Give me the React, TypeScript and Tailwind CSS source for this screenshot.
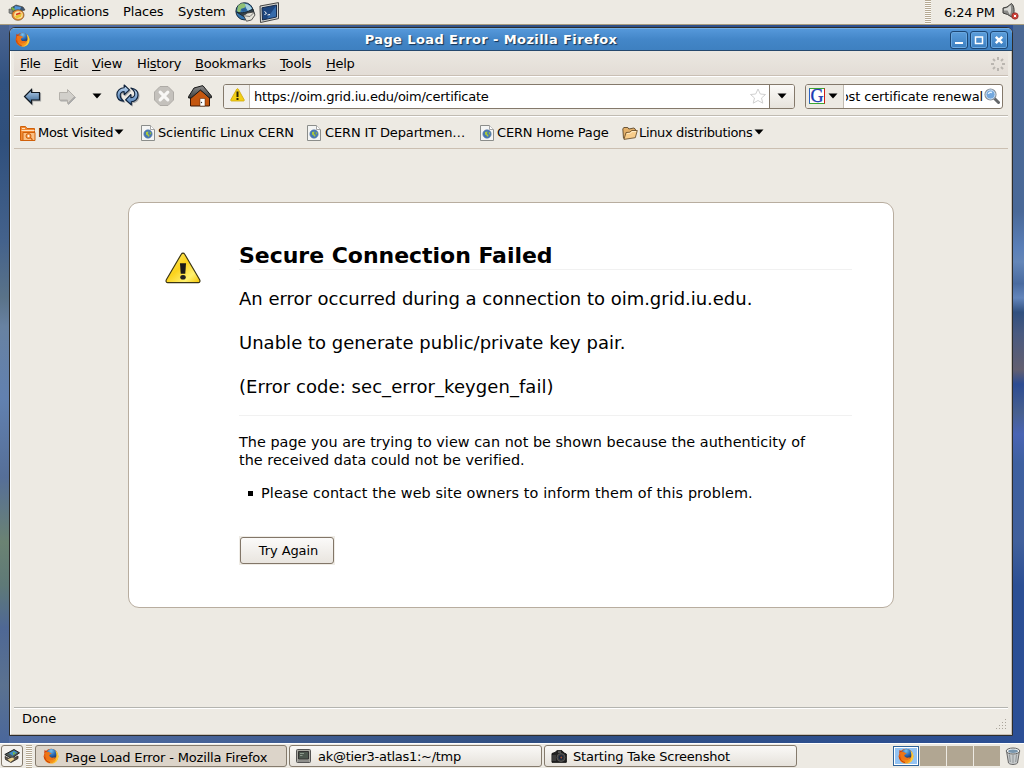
import React from 'react';

type P = { className?: string };

const Firefox = ({ className = '' }: P) => (
  <svg viewBox="0 0 16 16" className={className}>
    <defs>
      <radialGradient id="ffGlobe" cx=".45" cy=".2" r=".8"><stop stopColor="#7cc4ee" /><stop offset=".5" stopColor="#2f6fb8" /><stop offset="1" stopColor="#122c66" /></radialGradient>
      <linearGradient id="ffFox" x2="1" y2="1"><stop stopColor="#d2400c" /><stop offset=".5" stopColor="#f07812" /><stop offset="1" stopColor="#fbb42a" /></linearGradient>
    </defs>
    <circle cx="8" cy="8.200" r="7.400" fill="url(#ffFox)" />
    <path d="M1.200 5L1.600 1.800 4 4z" fill="#d2400c" />
    <circle cx="8.600" cy="6" r="5.200" fill="url(#ffGlobe)" />
    <path d="M2 4.200l3.800-.4C6.300 4.600 7.200 5 8.500 5c-.2 1.300-1.900 1.400-2.200 2.100 0 1.500 1 2.500 2.700 2.600 1.200.1 2-.5 2.900-.3-.5 2-3.400 3.200-5.800 2.300C3.500 11 2 7.500 2 4.200z" fill="#ee7416" />
    <path d="M12.300 2.400c3 2 3.900 5.800 2.500 9-1.400 3-4.600 4.600-7.600 4.100 3.300-.3 5.700-2.400 6.200-5.600.4-2.700-.1-5.300-1.100-7.500z" fill="#fdcb38" />
    <path d="M1.500 9c.6 3 2.800 5 5.500 5.500" stroke="#c63c08" fill="none" />
  </svg>
);

const Arrow = ({ off }: { off?: boolean }) => (
  <svg viewBox="0 0 18 17" className="h-[17px] w-[18px] drop-shadow-[1px_1px_0.5px_#aaa]">
    <defs><linearGradient id="ab" x2="0" y2="1"><stop stopColor="#b5d0ec" /><stop offset="1" stopColor="#34628f" /></linearGradient></defs>
    {off
      ? <path d="M1.500 4.500h8v-3l7 7-7 7v-3.500h-8z" fill="#d2d0cb" stroke="#b4b1ab" />
      : <path d="M16.500 4.500h-8v-3l-7 7 7 7V12h8z" fill="url(#ab)" stroke="#101820" strokeWidth="1.200" />}
  </svg>
);

const Caret = ({ className = '' }: P) => (
  <svg viewBox="0 0 10 6" className={`h-[6px] w-[10px] shrink-0 ${className}`}><path d="M.5.5h9L5 5.600z" fill="#000" /></svg>
);

const Reload = () => (
  <svg viewBox="0 0 24 23" className="h-[22px] w-[23px] drop-shadow-[1px_1px_0.5px_#aaa]">
    <defs><linearGradient id="rl" x2="0" y2="1"><stop stopColor="#c4dcf4" /><stop offset="1" stopColor="#4a7ab2" /></linearGradient></defs>
    <g fill="url(#rl)" stroke="#10233c" strokeWidth="1.200" strokeLinejoin="round">
      <path d="M8 18C3 17.500.8 14.500.9 11 1 7 4.500 3.800 8.500 3.900V1L14 6.200l-5.500 5V8C6 8 4.300 9.500 4.400 12c.1 2.500 1.600 4.500 3.600 6z" />
      <path d="M15.500 4.200c4.800.8 7.600 3.500 7.500 7.300 0 4-3.200 7-7 7.100v3.200L10 16.500l5.500-5.500v3.300c2.500 0 4.200-1.600 4.100-4-.1-2.400-1.600-4.500-4.100-6.100z" />
    </g>
  </svg>
);

const Stop = () => (
  <svg viewBox="0 0 20 20" className="h-5 w-5">
    <path d="M6 .5h8L19.500 6v8L14 19.500H6L.5 14V6z" fill="#c4c1bc" stroke="#aeaba6" />
    <path d="M6.200 6.200l7.600 7.600M13.800 6.200l-7.600 7.600" stroke="#f8f7f5" strokeWidth="3.200" strokeLinecap="round" />
  </svg>
);

const Home = () => (
  <svg viewBox="0 0 24 22" className="h-[22px] w-6">
    <defs><linearGradient id="rf" x2="0" y2="1"><stop stopColor="#8c8c8c" /><stop offset="1" stopColor="#3c3c3c" /></linearGradient></defs>
    <path d="M2.500 11L12 5l9.500 6v10h-19z" fill="#c4560f" stroke="#3c1605" />
    <path d="M.6 11.500L6 3l8-2.200h1L23.400 11v1.800h-2.200L12.500 5 3.200 13H.6z" fill="url(#rf)" stroke="#181818" strokeLinejoin="round" />
    <path d="M12 13.500h5V21h-5z" fill="#fff" stroke="#4d2007" strokeWidth=".5" /><circle cx="13.500" cy="17.500" r=".7" fill="#333" />
  </svg>
);

const Warn = ({ className = '' }: P) => (
  <svg viewBox="0 0 38 34" className={className}>
    <defs><linearGradient id="wy" x1="0" x2="1" y2="1"><stop stopColor="#fff27a" /><stop offset=".45" stopColor="#fbd21c" /><stop offset=".75" stopColor="#fff170" /><stop offset="1" stopColor="#f4c400" /></linearGradient></defs>
    <path d="M17.200 2.400c.9-1.500 2.700-1.500 3.600 0l15.800 27c.8 1.600 0 3.100-1.500 3.100H2.900c-1.500 0-2.300-1.500-1.500-3.100z" fill="url(#wy)" stroke="#3a3414" strokeWidth="1.200" />
    <path d="M15.800 12h6.400l-.8 11h-4.800z" fill="#191919" /><ellipse cx="19" cy="26.800" rx="2.900" ry="2.400" fill="#222" />
  </svg>
);

const WarnMini = () => (
  <svg viewBox="0 0 15 14" className="h-[14px] w-[15px]">
    <path d="M6.700 1.200c.4-.7 1.200-.7 1.600 0l5.900 10.600c.3.600 0 1.200-.7 1.200h-12c-.7 0-1-.6-.7-1.200z" fill="#f3cf14" stroke="#cfa70a" strokeWidth=".8" />
    <path d="M6.500 3.500h2v5.500h-2zM6.500 10h2v2h-2z" fill="#2a2405" />
  </svg>
);

const PageIcon = () => (
  <svg viewBox="0 0 14 16" className="h-4 w-[14px] shrink-0">
    <path d="M.5.5h9l4 4v11H.5z" fill="#f4f5f4" stroke="#8b8d8a" /><path d="M9.500.5v4h4" fill="#fff" stroke="#a5a5a5" />
    <circle cx="7" cy="9" r="4.200" fill="#4577b4" stroke="#5a7ba5" strokeWidth=".6" /><path d="M5 7l2.500-.5L7 9l1.500 1L8 12 6.500 10.500 5 9.500z" fill="#a8c83c" /><path d="M8.800 6.800l1.500 1-.3 2-1.200-1z" fill="#93b83b" />
  </svg>
);

const MostVisited = () => (
  <svg viewBox="0 0 16 16" className="h-4 w-4 shrink-0">
    <path d="M.5 1.500h5l1.500 2h7.500v12H.5z" fill="#f08a34" stroke="#d0600a" /><path d="M1.500 5.500h13M2 3.500h3" stroke="#ffe0bd" />
    <path d="M3 7.500h12v8H3z" fill="#fbc084" stroke="#d0600a" /><circle cx="8.500" cy="11" r="2.500" fill="#f3a055" stroke="#d0600a" /><circle cx="8.500" cy="11" r="1" fill="#fff" /><path d="M10.500 12.800l2 2" stroke="#d0600a" strokeWidth="1.300" />
  </svg>
);

const Folder = () => (
  <svg viewBox="0 0 16 14" className="h-[14px] w-4 shrink-0">
    <path d="M1.500 12.500L.8 3l1-1.500h4l1 1.500 5-1 1.500 1v2" fill="#e3b06a" stroke="#4b371c" strokeWidth=".8" /><path d="M2 13.400L4 6.500l4-.3 1.500-1.700h5.800l-2 7.200z" fill="#f8cd8b" stroke="#5d4423" strokeWidth=".8" strokeLinejoin="round" /><path d="M5 7.600l3.500-.4L10 5.600h4" fill="none" stroke="#ffecc9" />
  </svg>
);

const Foot = () => (
  <svg viewBox="0 0 18 18" className="h-[18px] w-[18px]">
    <path d="M3 5l5-3 7 2 2 3-4 1-8 1z" fill="#3b536e" stroke="#444" strokeWidth=".7" /><path d="M7 3l6 1-1 3H6z" fill="#4e93d8" /><path d="M4 4l3 2-1 2-3-1z" fill="#76b83a" />
    <path d="M1 6l4 1-1 4-3-1z" fill="#8c8f8c" stroke="#555" strokeWidth=".6" />
    <ellipse cx="10" cy="12" rx="6" ry="5.300" fill="#ef8d32" stroke="#715022" strokeWidth=".7" /><ellipse cx="10.500" cy="12" rx="4.300" ry="3.800" fill="#f9e8a4" /><path d="M7 13l7-3-1 4-5 1.500z" fill="#e9c333" /><path d="M8 11.500l4.500-1.500" stroke="#d6301a" strokeWidth="1.500" />
  </svg>
);

const Globe = () => (
  <svg viewBox="0 0 21 20" className="h-5 w-[21px]">
    <circle cx="9.500" cy="9.300" r="8.600" fill="#3474ae" stroke="#192c3b" /><path d="M3 4c3-4 7-3 9-1L9 6l-3 1-1 4-3-2z" fill="#8fc074" /><path d="M10 2c3 0 6 2 7 5l-4 2-2-3z" fill="#a5cfdf" /><path d="M6 7l4-1 2 2-4 2z" fill="#2b5f96" />
    <path d="M1.500 10c5 2 11 0 16.500-3l1.500 5-4 4-6-1z" fill="#36434a" stroke="#172026" strokeWidth=".8" /><path d="M8.500 13.500l4-2.500 6-1 1.500 3-3.500 5-5 1.200z" fill="#e4e2d8" stroke="#333" strokeWidth=".8" /><path d="M9.500 13.800l5.500.7 4-4" fill="none" stroke="#777" />
  </svg>
);

const Terminal = () => (
  <svg viewBox="0 0 21 21" className="h-[21px] w-[21px]">
    <path d="M1 4L19.500.6v16L1.500 20.500z" fill="#d5d6d1" stroke="#444" /><path d="M3 5.800L17.500 3v12L3.500 18z" fill="#1d467f" stroke="#182b4a" /><path d="M17 4v10.500L8 16.500z" fill="#356bab" /><path d="M5.500 9.500l2 1.500-2 2M8.500 13l2.500-.5" stroke="#fff" fill="none" />
  </svg>
);

const Speaker = () => (
  <svg viewBox="0 0 17 18" className="h-[18px] w-[17px]">
    <path d="M1 6l4-1L9.500 1.500c3 2.500 3.500 9 1 14L5.500 12.500 1 11z" fill="#8b8b88" stroke="#3b3b39" /><path d="M2 6.800l3.500-1L8.500 3c.8 3 .8 7-.5 10l-2.500-4.500L2 8.500z" fill="#dadad6" />
    <circle cx="13" cy="14" r="3.200" fill="#cf4238" stroke="#822" strokeWidth=".7" /><path d="M11.900 12.900l2.200 2.200m0-2.200l-2.200 2.200" stroke="#fff" />
  </svg>
);

const Trash = () => (
  <svg viewBox="0 0 16 18" className="h-[18px] w-4">
    <path d="M1.500 4l2 12c2 2 7 2 9 0l2-12z" fill="#c6c9ca" stroke="#666" /><path d="M4.500 7.500l.8 7.500M8 8v8M11.500 7.500l-.8 7.500" stroke="#8f9598" /><ellipse cx="8" cy="4" rx="6.800" ry="3" fill="#eceeee" stroke="#666" /><ellipse cx="8" cy="4.200" rx="4.800" ry="1.700" fill="#7895ad" />
  </svg>
);

const Desk = () => (
  <svg viewBox="0 0 16 14" className="h-[14px] w-4">
    <path d="M.8 5.500l9.200-5 5.500 3.300-8 5.700z" fill="#4d5a58" stroke="#222" /><path d="M5 4.200l5-2.600 3.500 2-5 3.200z" fill="#3c8ac9" /><path d="M9 3l3 1-3 2z" fill="#7ab941" /><path d="M1 7.500l6 3 7-3.500v2.500l-7 4-5.500-3z" fill="#5b5143" stroke="#2b2722" strokeWidth=".8" /><path d="M3.500 10.500l5-2 2 1.600-4 2.900z" fill="#f0d590" />
  </svg>
);

const TermSmall = () => (
  <svg viewBox="0 0 15 14" className="h-[14px] w-[15px]"><rect x=".5" y=".5" width="14" height="13" rx="1" fill="#a9a9a2" stroke="#555" /><path d="M2.500 2.500h10v7.500h-10z" fill="#4b564d" stroke="#333" /><path d="M4 4.500h4M4 6.500h2.500" stroke="#8b988c" /><path d="M2 12h11" stroke="#777" /></svg>
);

const Camera = () => (
  <svg viewBox="0 0 16 13" className="h-[13px] w-4"><path d="M1 3.500l3-1L6 .7h5L13 3l2.300 1v8.300H1z" fill="#222" stroke="#111" /><path d="M2 5v6M4 5v6" stroke="#565656" /><circle cx="10" cy="7.500" r="4" fill="#3b3b3b" stroke="#666" strokeWidth=".7" /><circle cx="10" cy="7.500" r="2.300" fill="#142340" /><circle cx="10.300" cy="7.500" r="1" fill="#a8552a" /><path d="M7 2h3" stroke="#888" /></svg>
);

const Search = () => (
  <svg viewBox="0 0 16 16" className="h-4 w-4"><path d="M10.500 10.500l4 4" stroke="#64676a" strokeWidth="3" strokeLinecap="round" /><circle cx="6.500" cy="6.500" r="5.500" fill="#73a8de" stroke="#8d9296" strokeWidth="1.200" /><circle cx="6.500" cy="6.500" r="4.500" fill="none" stroke="#cfe0f1" /><path d="M4.500 6c0-1.500 2-2.300 3.500-1.500" stroke="#e4f3ff" strokeWidth="1.500" fill="none" /></svg>
);

const Throbber = () => (
  <svg viewBox="0 0 14 14" className="h-[14px] w-[14px]"><g stroke="#bab6b0" strokeWidth="2"><path d="M7 0v3M7 11v3M0 7h3M11 7h3M2 2l2 2M10 10l2 2M2 12l2-2M10 4l2-2" /></g></svg>
);

const Grip = ({ className = '' }: P) => (
  <div className={`w-[6px] shrink-0 bg-[repeating-linear-gradient(#b5a993_0_1px,#fbfaf7_1px_2px)] ${className}`} />
);

const Menu = ({ k, pre = '', rest, className }: { k: string; pre?: string; rest: string; className: string }) => (
  <span className={`shrink-0 whitespace-nowrap ${className}`}>{pre}<u className="underline-offset-2">{k}</u>{rest}</span>
);

const WinBtn = ({ children }: { children: React.ReactNode }) => (
  <span className="flex h-[18px] w-[18px] items-center justify-center rounded-[3px] border border-[#1c4673] bg-linear-to-b from-[#5b9ddb] to-[#3c7fc0] shadow-[inset_0_0_0_1px_#6aa8e0]">
    <svg viewBox="0 0 10 10" className="h-[10px] w-[10px]">{children}</svg>
  </span>
);

const Task = ({ icon, label, active, className }: { icon: React.ReactNode; label: string; active?: boolean; className: string }) => (
  <div className={`flex h-[22px] shrink-0 items-center rounded-[3px] border border-[#857b6d] whitespace-nowrap ${active ? 'bg-[#dcd4c9]' : 'bg-linear-to-b from-[#faf9f7] to-[#e6e2db]'} ${className}`}>
    {icon}<span className={active ? 'pt-[3px]' : 'pt-[2px]'}>{label}</span>
  </div>
);

export default function App() {
  return (
    <div className="flex h-[768px] w-[1024px] flex-col overflow-hidden bg-[#3a5a92] font-['DejaVu_Sans',sans-serif] text-[13px] leading-4 text-black">
      <header className="flex h-[25px] shrink-0 items-center border-b border-[#a89c7e] bg-[#edeae3]">
        <div className="w-[32px] shrink-0 pl-[8px]"><Foot /></div>
        <span className="w-[91px] shrink-0 tracking-[-0.22px]">Applications</span>
        <span className="w-[55px] shrink-0 tracking-[-0.15px]">Places</span>
        <span className="w-[57px] shrink-0 tracking-[-0.15px]">System</span>
        <Globe />
        <div className="pl-[3px]"><Terminal /></div>
        <div className="grow" />
        <Grip className="h-6" />
        <span className="w-[71px] shrink-0 pt-px pl-[13px] tracking-[-0.25px] whitespace-nowrap">6:24 PM</span>
        <div className="w-[22px] pb-[2px]"><Speaker /></div>
      </header>

      <div className="flex h-[718px] shrink-0 bg-linear-to-r from-[#5570a6] via-[#304f82] to-[#2c4f94]">
        <div className="w-[9px] shrink-0 bg-[linear-gradient(#4a6592_0,#31517f_8%,#2f4f7c_16%,#44628c_30%,#5a7389_38%,#6882a2_42%,#6281b0_52%,#566f98_63%,#6b8373_72%,#5f7a78_78%,#4f6895_84%,#5b7290_92%,#4a679c_100%)]" />
        <div className="w-[1004px] shrink-0 pt-[2px]">
          <main className="flex h-[709px] w-[1004px] flex-col overflow-hidden rounded-t-[6px] border border-[#2d2d2c] bg-[#edeae3]">
            <div className="flex h-[23px] shrink-0 items-center border-t border-b border-t-[#75aee2] border-b-[#25486d] bg-linear-to-b from-[#5598da] via-[#4386c8] to-[#3e80c0] pr-[4px] pl-[5px]">
              <Firefox className="mb-px h-[15px] w-[15px]" />
              <span className="grow pl-[2px] text-center font-bold tracking-[0.4px] text-white [text-shadow:1px_1px_1px_#16304e]">Page Load Error - Mozilla Firefox</span>
              <div className="flex gap-[2px]">
                <WinBtn><path d="M1 8h8" stroke="#fff" strokeWidth="2" /></WinBtn>
                <WinBtn><path d="M1.500 2h7v6.500h-7zM1 2h8" fill="none" stroke="#fff" strokeWidth="1.500" /></WinBtn>
                <WinBtn><path d="M1.800 1.800l6.400 6.400m0-6.400l-6.400 6.400" stroke="#fff" strokeWidth="2.500" /></WinBtn>
              </div>
            </div>

            <div className="flex min-h-0 grow flex-col border-r border-b border-l border-r-[#c9c0b4] border-b-[#c9c0b4] border-l-white px-[3px]">
              <nav className="flex h-[25px] shrink-0 items-center border-b border-[#c9bfb4] bg-linear-to-b from-[#ebe7e1] to-[#e3ddd6] pt-[2px] pl-[6px] tracking-[-0.3px]">
                <Menu k="F" rest="ile" className="w-[34px]" />
                <Menu k="E" rest="dit" className="w-[38px]" />
                <Menu k="V" rest="iew" className="w-[45px] tracking-[-0.2px]" />
                <Menu pre="Hi" k="s" rest="tory" className="w-[58px]" />
                <Menu k="B" rest="ookmarks" className="w-[85px] tracking-[-0.2px]" />
                <Menu k="T" rest="ools" className="w-[46px] tracking-[-0.15px]" />
                <Menu k="H" rest="elp" className="grow" />
                <div className="pr-[3px]"><Throbber /></div>
              </nav>

              <section className="flex h-[40px] shrink-0 items-center border-t border-b border-t-white border-b-[#c0bbb2]">
                <div className="w-[35px] shrink-0 pl-[9px]"><Arrow /></div>
                <div className="w-[43px] shrink-0 pl-[9px]"><Arrow off /></div>
                <Caret />
                <div className="w-[39px] shrink-0 pb-[2px] pl-[14px]"><Reload /></div>
                <div className="w-[34px] shrink-0 pl-[13px]"><Stop /></div>
                <div className="w-[48px] shrink-0 pl-[13px]"><Home /></div>
                <div className="flex h-[25px] w-[572px] shrink-0 items-center overflow-hidden rounded-[3px] border border-[#84796b] bg-white">
                  <div className="flex h-full w-[26px] shrink-0 items-center border-r border-[#c1bbb1] bg-[#f1efeb] pb-[2px] pl-[6px]"><WarnMini /></div>
                  <span className="grow pt-[2px] pl-[4px] tracking-[-0.23px]">https://oim.grid.iu.edu/oim/certificate</span>
                  <svg viewBox="0 0 18 17" className="mr-[2px] h-[17px] w-[18px]"><path d="M9 1l2.300 5 5.200.5-4 3.500 1.300 5.200L9 12.500l-4.800 2.700L5.500 10l-4-3.500L6.700 6z" fill="#fff" stroke="#cfcfcf" /></svg>
                  <div className="flex h-full w-[25px] shrink-0 items-center border-l border-[#84796b] bg-linear-to-b from-[#fbfaf8] to-[#e7e3dc] pl-[7px]"><Caret /></div>
                </div>
                <div className="ml-[10px] flex h-[25px] w-[198px] shrink-0 items-center overflow-hidden rounded-[3px] border border-[#84796b] bg-white">
                  <div className="flex h-full w-[38px] shrink-0 items-center border-r border-[#c1bbb1] bg-[#edeae3] pl-[3px]">
                    <span className="flex h-4 w-4 shrink-0 items-center justify-center overflow-hidden border border-t-[#3ba532] border-r-[#cf1f16] border-b-[#3ba532] border-l-[#2b62c4] bg-white font-['Liberation_Serif',serif] text-[18px] leading-none text-[#1b39b2] [-webkit-text-stroke:0.3px_#1b39b2]">G</span>
                    <Caret className="ml-[3px]" />
                  </div>
                  <div className="ml-[2px] flex w-[137px] shrink-0 justify-end overflow-hidden pt-[2px] tracking-[-0.13px] whitespace-nowrap">host certificate renewal</div>
                  <div className="ml-px"><Search /></div>
                </div>
              </section>

              <section className="flex h-[33px] shrink-0 items-center border-t border-b border-t-white border-b-[#cbbfb1] whitespace-nowrap">
                <div className="flex w-[127px] shrink-0 items-center pl-[6px]"><MostVisited /><span className="ml-[2px] w-[76px] shrink-0 tracking-[-0.33px]">Most Visited</span><Caret className="mb-[2px]" /></div>
                <div className="flex w-[166px] shrink-0 items-center"><PageIcon /><span className="pl-[3px] tracking-[-0.13px]">Scientific Linux CERN</span></div>
                <div className="flex w-[173px] shrink-0 items-center"><PageIcon /><span className="pl-[4px] tracking-[-0.14px]">CERN IT Departmen…</span></div>
                <div className="flex w-[142px] shrink-0 items-center"><PageIcon /><span className="pl-[3px] tracking-[-0.19px]">CERN Home Page</span></div>
                <div className="flex items-center"><Folder /><span className="w-[116px] shrink-0 pl-px tracking-[-0.35px]">Linux distributions</span><Caret className="mb-[2px]" /></div>
              </section>

              <section className="flex min-h-0 grow flex-col border-b border-[#b4b4af] pt-[53px]">
                <article className="ml-[114px] flex h-[406px] w-[766px] shrink-0 rounded-[11px] border border-[#b8ad9f] bg-white">
                  <div className="w-[110px] shrink-0 pt-[48px] pl-[36px]"><Warn className="h-[34px] w-[36px]" /></div>
                  <div className="w-[613px]">
                    <h1 className="h-[67px] border-b border-[#f1f1f1] pt-[40px] text-[22px] leading-[26px] font-bold tracking-[-0.03px] whitespace-nowrap">Secure Connection Failed</h1>
                    <div className="flex h-[146px] flex-col gap-[22px] border-b border-[#f1f1f1] pt-[18px] text-[18px] leading-[22px] whitespace-nowrap">
                      <p className="tracking-[-0.02px]">An error occurred during a connection to oim.grid.iu.edu.</p>
                      <p className="tracking-[0.02px]">Unable to generate public/private key pair.</p>
                      <p className="tracking-[0.06px]">(Error code: sec_error_keygen_fail)</p>
                    </div>
                    <p className="pt-[17px] text-[14.4px] leading-[18px] tracking-[0.025px] whitespace-nowrap">The page you are trying to view can not be shown because the authenticity of<br />the received data could not be verified.</p>
                    <div className="mt-[15px] flex items-center text-[14.4px] leading-[18px] tracking-[0.1px] whitespace-nowrap"><span className="mr-[8px] ml-[9px] h-[5px] w-[5px] bg-black" />Please contact the web site owners to inform them of this problem.</div>
                    <div className="mt-[34px] w-[96px] bg-[#efece6] p-px"><button className="flex h-[27px] w-[94px] items-center justify-center rounded-[3px] border border-[#827668] bg-linear-to-b from-[#fbfaf9] to-[#e9e5df] pt-px pl-[3px] tracking-[-0.1px]">Try Again</button></div>
                  </div>
                </article>
              </section>
              <footer className="flex h-[26px] shrink-0 items-center justify-between border-t border-white pr-[1px] pb-[5px] pl-[8px]">
                <span>Done</span>
                <svg viewBox="0 0 12 12" className="mt-[10px] h-3 w-3"><path d="M10 1h1v1h-1zM7 4h1v1H7zM10 4h1v1h-1zM4 7h1v1H4zM7 7h1v1H7zM10 7h1v1h-1zM1 10h1v1H1zM4 10h1v1H4zM7 10h1v1H7zM10 10h1v1h-1z" fill="#aaa59b" /></svg>
              </footer>
            </div>
          </main>
        </div>
        <div className="grow bg-[linear-gradient(#4b6894_0,#4a6998_26%,#5a7fb8_31%,#6486b8_33%,#4a6ba0_36%,#6385bb_38%,#31507f_40%,#4a5a80_43%,#635f70_48%,#2d4c92_50%,#48608f_54%,#4a64b4_57%,#3e60a0_61%,#41609c_72%,#2c4f94_78%,#2b4f96)]" />
      </div>

      <div className="flex h-[25px] shrink-0 items-center border-t border-white bg-[#edeae3]">
        <div className="ml-px flex h-[22px] w-[22px] shrink-0 items-center justify-center rounded-[3px] border border-[#857b6d] bg-[#f3f1ed]"><Desk /></div>
        <Grip className="ml-[3px] h-[23px]" />
        <Task active className="ml-[3px] w-[252px] pl-[7px] tracking-[-0.16px]" icon={<Firefox className="mr-[6px] h-4 w-4" />} label="Page Load Error - Mozilla Firefox" />
        <Task className="ml-[2px] w-[253px] pl-[6px] tracking-[-0.28px]" icon={<span className="mr-[7px]"><TermSmall /></span>} label="ak@tier3-atlas1:~/tmp" />
        <Task className="ml-[2px] w-[253px] pl-[6px] tracking-[-0.2px]" icon={<span className="mr-[6px]"><Camera /></span>} label="Starting Take Screenshot" />
        <div className="ml-[96px] flex h-5 shrink-0 gap-px">
          <div className="flex w-[26px] items-center justify-center border border-[#2e6299] bg-[#94c3f2] shadow-[inset_0_0_0_1px_white]"><Firefox className="h-4 w-4" /></div>
          <div className="w-[26px] bg-[#b1a692]" /><div className="w-[26px] bg-[#b1a692]" /><div className="w-[26px] bg-[#b1a692]" />
        </div>
        <div className="ml-[5px]"><Trash /></div>
      </div>
    </div>
  );
}
